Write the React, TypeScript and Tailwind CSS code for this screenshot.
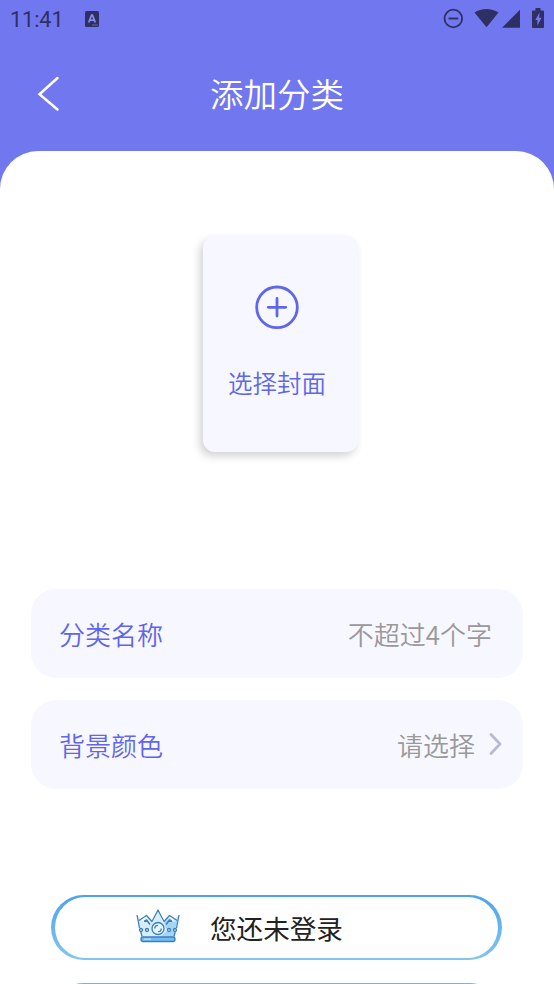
function StatusBar() {
  return (
    <div className="flex h-[38px] shrink-0 items-center px-[10px] text-[#2e2f63]">
      <span className="mt-[2px] w-[54px] font-[Roboto] text-[21.500px] font-normal leading-6">11:41</span>
      <svg className="ml-[21px] -mt-px" width="14" height="16" viewBox="0 0 14 16">
        <rect width="14" height="16" rx="1.5" fill="currentColor" />
        <path d="M3.700 11.500 6.600 4h.8L10.300 11.500M5 9.200h4" fill="none" stroke="#8a8df0" strokeWidth="1.700" />
        <path d="M7.500 14h5" stroke="#a5a7f5" strokeWidth="1" strokeDasharray="1 1" />
      </svg>
      <svg className="ml-auto -mr-[1px] -mt-[2px]" width="102" height="22" viewBox="0 0 102 22">
        <circle cx="10.300" cy="11.500" r="8.800" fill="none" stroke="currentColor" strokeWidth="1.800" />
        <path d="M5.500 11.500h9.800" stroke="currentColor" strokeWidth="1.900" />
        <path d="M31.500 5.600C38.500.800 48.500.800 55.500 5.600L43.500 20.200z" fill="currentColor" />
        <path d="M59.500 20.700V20.200L77 2.800v17.900z" fill="currentColor" />
        <path d="M90 3.500h2.500V1h5v2.500h2.500q1 0 1 1v15.500q0 1-1 1H90q-1 0-1-1V4.500q0-1 1-1z" fill="currentColor" />
        <path d="M96.500 5.500 92.300 13H94.400V18.500L98.600 10.800H96.200z" fill="#7277ee" />
      </svg>
    </div>
  );
}

function Header() {
  return (
    <header className="flex h-[113px] shrink-0 items-center justify-center px-[37px]">
      <button type="button" aria-label="返回" className="-mt-[2px] w-6">
        <svg width="24" height="36" viewBox="0 0 24 36" fill="none">
          <path d="M20.500 2 2.500 18.200 20.500 33.500" stroke="white" strokeWidth="2.500" strokeLinecap="round" />
        </svg>
      </button>
      <h1 className="flex-1 pb-[2px] pr-6 text-center text-[33.500px] text-white">添加分类</h1>
    </header>
  );
}

function CoverPicker() {
  return (
    <button
      type="button"
      className="mx-auto mt-[85px] flex h-[216px] w-[155px] flex-col items-center rounded-xl bg-[#f7f7ff] pr-[7px] pt-[49px] text-[#5f66ea] shadow-[-3px_4px_8px_rgba(0,0,0,0.18)]"
    >
      <svg width="44" height="44" viewBox="0 0 44 44" fill="none" stroke="currentColor" strokeLinecap="round">
        <circle cx="22" cy="22.300" r="20.300" strokeWidth="2.800" />
        <path d="M13.200 22.300h17.600M22 13.500v17.600" strokeWidth="2.800" />
      </svg>
      <span className="mt-9 text-[24.500px] leading-9">选择封面</span>
    </button>
  );
}

function Crown() {
  return (
    <svg className="-mt-[3px]" width="44" height="34" viewBox="0 0 44 34" fill="none" stroke="#3b7fbf" strokeWidth="1.300" strokeLinejoin="round">
      <path d="M1 6 6 28h32L43 6l-7 6-4-4-5 6L22 1l-5 13-5-6-5 5z" fill="#d8edfa" stroke="none" />
      <path d="M28 13 31 22 24 28h14l3-16-4 1-3-4z" fill="#a5d5f5" stroke="none" />
      <path d="M1 6l2.500 13M4.800 23l1.200 4.500M43 6l-2.500 13M39.200 23 38 27.500M3 11.500l7.500-5 5.500 6L22 1l6 11.500 5.500-6 7.500 5" />
      <path d="m8 12.500 2.500-1.500 3.500 4.500M36 12.500 33.500 11 30 15.500" strokeWidth="1.500" />
      <circle cx="22" cy="19.500" r="6" fill="#e6f5fd" />
      <path d="M18.800 19.500a3.200 3.200 0 0 1 3.200-3.200M25.200 19.500a3.200 3.200 0 0 1-3.200 3.200" />
      <circle cx="5" cy="21" r="1.500" fill="#d8edfa" />
      <circle cx="11" cy="21" r="1.500" fill="#d8edfa" />
      <circle cx="33" cy="21" r="1.500" fill="#d8edfa" />
      <circle cx="39" cy="21" r="1.500" fill="#d8edfa" />
      <rect x="5" y="28" width="34" height="4.500" rx="2" fill="#73bdf0" />
      <path d="M8 30.200h7" stroke="#b9e2fb" />
    </svg>
  );
}

export default function App() {
  return (
    <div className="flex h-[984px] w-full flex-col overflow-hidden bg-[#7177ee] font-['Noto_Sans_CJK_SC',sans-serif] font-[350]">
      <StatusBar />
      <Header />
      <main className="h-[833px] shrink-0 overflow-hidden rounded-t-[38px] bg-white px-[31px]">
        <div className="flex pl-[7px]">
          <CoverPicker />
        </div>

        <div className="mt-[137px] flex flex-col gap-[22px] text-[26px]">
          <div className="flex h-[89px] items-center justify-between rounded-[25px] bg-[#f7f7ff] pb-px pl-7 pr-[31px]">
            <span className="text-[#5f66ea]">分类名称</span>
            <span className="text-[#999999]">不超过4个字</span>
          </div>
          <button type="button" className="flex h-[89px] items-center rounded-[25px] bg-[#f7f7ff] pb-px pl-7 pr-5">
            <span className="text-[#5f66ea]">背景颜色</span>
            <span className="ml-auto text-[#999999]">请选择</span>
            <svg className="ml-3" width="16" height="24" viewBox="0 0 16 24" fill="none">
              <path d="m4 2.500 9 9.500-9 9.500" stroke="#b9bbcf" strokeWidth="2.800" strokeLinecap="round" strokeLinejoin="round" />
            </svg>
          </button>
        </div>

        <div className="ml-5 mt-[106px] flex flex-col gap-[23px]">
          <div className="h-[65px] w-[451px] rounded-full bg-linear-to-b from-[#4ba3ec] to-[#83c6f0] px-1 py-[2px]">
            <div className="flex h-full items-center rounded-full bg-white pl-[81px]">
              <Crown />
              <span className="ml-[30px] text-[26.600px] font-normal leading-9 text-[#222222]">您还未登录</span>
            </div>
          </div>
          <div className="h-[65px] w-[451px] rounded-full bg-linear-to-b from-[#6db7f1] to-[#83c6f0] px-1 py-[2px]">
            <div className="h-full rounded-full bg-white" />
          </div>
        </div>
      </main>
    </div>
  );
}
